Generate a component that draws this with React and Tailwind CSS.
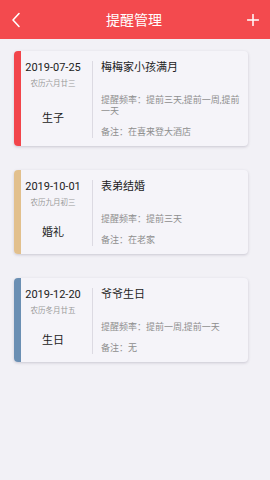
import React from "react";

const reminders = [
  {
    id: 1,
    date: "2019-07-25",
    lunar: "农历六月廿三",
    label: "生子",
    title: "梅梅家小孩满月",
    freq: "提前三天,提前一周,提前一天",
    note: "在喜来登大酒店",
    bar: "bg-[#f2454b]",
  },
  {
    id: 2,
    date: "2019-10-01",
    lunar: "农历九月初三",
    label: "婚礼",
    title: "表弟结婚",
    freq: "提前三天",
    note: "在老家",
    bar: "bg-[#e2c08d]",
  },
  {
    id: 3,
    date: "2019-12-20",
    lunar: "农历冬月廿五",
    label: "生日",
    title: "爷爷生日",
    freq: "提前一周,提前一天",
    note: "无",
    bar: "bg-[#6b8fb3]",
  },
];

function ReminderCard({ item }) {
  return (
    <div className="ml-[14px] w-[234px] flex rounded-[4px] bg-[#f5f4f9] shadow-[0_1px_3px_rgba(60,50,80,0.22)]">
      <div className={`w-[7px] shrink-0 rounded-l-[4px] ${item.bar}`} />
      <div className="flex flex-1 pt-[10px] pb-[8px]">
        <div className="w-[71px] shrink-0 pr-[7px] flex flex-col items-center">
          <div className="text-[11px] leading-[14px] text-[#222]">{item.date}</div>
          <div className="mt-[4px] text-[7.5px] leading-[10px] text-[#9a9a9a]">{item.lunar}</div>
          <div className="flex-1 flex items-center pt-[11px] text-[11px] leading-[14px] text-[#222]">
            {item.label}
          </div>
        </div>
        <div className="flex-1 border-l border-[#dcdae2] pl-[8px] pr-[5px]">
          <div className="text-[11px] leading-[14px] text-[#222]">{item.title}</div>
          <div className="mt-[20px] text-[9px] leading-[11px] text-[#8e8e8e]">
            提醒频率：{item.freq}
          </div>
          <div className="mt-[10px] text-[9px] leading-[11px] text-[#8e8e8e]">
            备注：{item.note}
          </div>
        </div>
      </div>
    </div>
  );
}

export default function App() {
  return (
    <div
      className="w-[270px] h-[480px] bg-[#f2f1f6] overflow-hidden"
      style={{ fontFamily: "Roboto, 'Noto Sans CJK SC', sans-serif" }}
    >
      <div className="h-[39px] bg-[#f34a4e] flex items-center justify-between px-[11px] text-white">
        <svg width="10" height="16" viewBox="0 0 10 16" fill="none">
          <path d="M8 1.5 2 8l6 6.5" stroke="white" strokeWidth="1.6" strokeLinecap="round" strokeLinejoin="round" />
        </svg>
        <div className="text-[14px] leading-[18px]">提醒管理</div>
        <svg width="12" height="12" viewBox="0 0 12 12" fill="none">
          <path d="M6 0.5v11M0.5 6h11" stroke="white" strokeWidth="1.5" strokeLinecap="round" />
        </svg>
      </div>
      <div className="flex flex-col gap-[24px] pt-[12px]">
        {reminders.map((item) => (
          <ReminderCard key={item.id} item={item} />
        ))}
      </div>
    </div>
  );
}
